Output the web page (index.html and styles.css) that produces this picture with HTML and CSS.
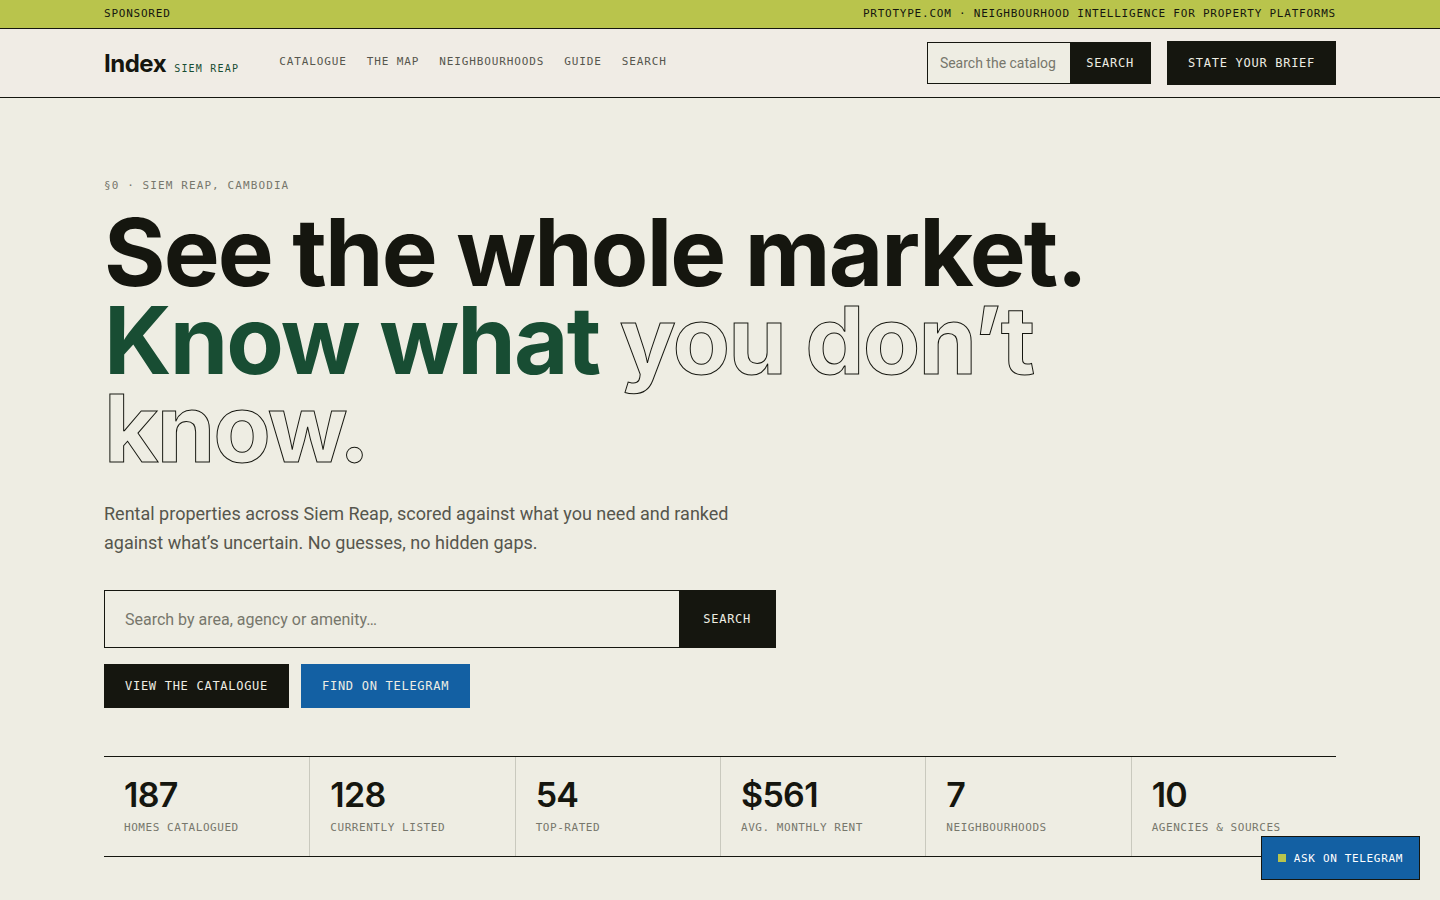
FILE: index.html
```html
<!DOCTYPE html>
<html lang="en">
  <head>
    <meta charset="UTF-8" />
    <meta name="viewport" content="width=device-width, initial-scale=1.0" />
    <title>Index Siem Reap</title>
    <link rel="stylesheet" href="styles.css">
  </head>
  <body>
    <div class="sponsor">
      <div class="wrap sponsor-inner">
        <span>Sponsored</span>
        <span>prtotype.com · Neighbourhood intelligence for property platforms</span>
      </div>
    </div>

    <header class="header">
      <div class="wrap header-inner">
        <a class="brand" href="#">Index <span class="brand-place">Siem Reap</span></a>
        <nav class="nav">
          <a href="#">Catalogue</a>
          <a href="#">The map</a>
          <a href="#">Neighbourhoods</a>
          <a href="#">Guide</a>
          <a href="#">Search</a>
        </nav>
        <form class="search search-small">
          <input type="text" aria-label="Search the catalogue" placeholder="Search the catalog" />
          <button type="submit">Search</button>
        </form>
        <a class="button" href="#">State your brief</a>
      </div>
    </header>

    <main class="wrap hero">
      <p class="eyebrow">§0 · Siem Reap, Cambodia</p>
      <h1>
        See the whole market.<br />
        <span class="green">Know what</span> <span class="outline">you don’t know.</span>
      </h1>
      <p class="lead">
        Rental properties across Siem Reap, scored against what you need and
        ranked against what’s uncertain. No guesses, no hidden gaps.
      </p>
      <form class="search search-large">
        <input type="text" aria-label="Search homes" placeholder="Search by area, agency or amenity…" />
        <button type="submit">Search</button>
      </form>
      <div class="actions">
        <a class="button" href="#">View the catalogue</a>
        <a class="button button-blue" href="#">Find on Telegram</a>
      </div>

      <dl class="stats">
        <div class="stat">
          <dt>Homes catalogued</dt>
          <dd>187</dd>
        </div>
        <div class="stat">
          <dt>Currently listed</dt>
          <dd>128</dd>
        </div>
        <div class="stat">
          <dt>Top-rated</dt>
          <dd>54</dd>
        </div>
        <div class="stat">
          <dt>Avg. monthly rent</dt>
          <dd>$561</dd>
        </div>
        <div class="stat">
          <dt>Neighbourhoods</dt>
          <dd>7</dd>
        </div>
        <div class="stat">
          <dt>Agencies &amp; sources</dt>
          <dd>10</dd>
        </div>
      </dl>
    </main>

    <a class="telegram" href="#"><span class="telegram-dot"></span>Ask on Telegram</a>
  </body>
</html>
```

FILE: styles.css
```css
:root {
  --ink: #15160f;
  --paper: #eeede3;
  --panel: #f0ece5;
  --text: #56564d;
  --muted: #77776c;
  --line: #c9c9be;
  --green: #184d33;
  --lime: #b9c44c;
  --blue: #1360a3;
  --mono: "DejaVu Sans Mono", monospace;
  --sans: Roboto, sans-serif;
}
* {
  box-sizing: border-box;
}
body {
  margin: 0;
  background: var(--paper);
  color: var(--ink);
  font-family: var(--sans);
}
a {
  color: inherit;
  text-decoration: none;
}
.wrap {
  max-width: 1280px;
  margin: 0 auto;
  padding: 0 24px;
}

/* sponsor strip */
.sponsor {
  background: var(--lime);
  border-bottom: 1px solid var(--ink);
  font-family: var(--mono);
  font-size: 11px;
  line-height: 16px;
  letter-spacing: 0.07em;
  text-transform: uppercase;
}
.sponsor-inner {
  display: flex;
  justify-content: space-between;
  padding-top: 6px;
  padding-bottom: 6px;
}

/* header */
.header {
  background: var(--panel);
  border-bottom: 1px solid var(--ink);
}
.header-inner {
  display: flex;
  align-items: center;
  gap: 16px;
  padding-top: 12px;
  padding-bottom: 12px;
}
.brand {
  display: flex;
  align-items: baseline;
  gap: 8px;
  font-family: Inter, sans-serif;
  font-size: 24px;
  font-weight: 700;
  letter-spacing: -0.02em;
}
.brand-place {
  font-family: var(--mono);
  font-size: 10px;
  font-weight: 400;
  letter-spacing: 0.12em;
  text-transform: uppercase;
  color: var(--green);
}
.nav {
  display: flex;
  gap: 20px;
  margin-left: 24px;
  margin-right: auto;
  font-family: var(--mono);
  font-size: 11px;
  line-height: 16px;
  letter-spacing: 0.08em;
  text-transform: uppercase;
  color: var(--text);
}
.nav a {
  padding-bottom: 2px;
  border-bottom: 1px solid transparent;
}

/* search fields */
.search {
  display: flex;
  border: 1px solid var(--ink);
  background: var(--paper);
}
.search input {
  flex: 1;
  min-width: 0;
  border: 0;
  margin: 0;
  padding: 0 20px;
  background: transparent;
  color: var(--ink);
  font-family: var(--sans);
  font-size: 16px;
}
.search input::placeholder {
  color: var(--muted);
  opacity: 1;
}
.search button {
  border: 0;
  padding: 0 24px;
  background: var(--ink);
}
.search button,
.button {
  color: var(--paper);
  font-family: var(--mono);
  font-size: 12px;
  letter-spacing: 0.06em;
  text-transform: uppercase;
  cursor: pointer;
}
.search-small {
  width: 224px;
  height: 42px;
}
.search-small input {
  padding: 0 12px;
  font-size: 14px;
}
.search-small button {
  padding: 0 16px;
}
.search-large {
  max-width: 672px;
  height: 58px;
}
.button {
  display: inline-flex;
  align-items: center;
  height: 44px;
  padding: 0 20px;
  border: 1px solid var(--ink);
  background: var(--ink);
}
.button-blue {
  background: var(--blue);
  border-color: var(--blue);
}

/* hero */
.hero {
  padding-top: 80px;
  padding-bottom: 80px;
}
.eyebrow {
  margin: 0 0 14px;
  font-family: var(--mono);
  font-size: 11px;
  line-height: 16px;
  letter-spacing: 0.1em;
  text-transform: uppercase;
  color: var(--muted);
}
h1 {
  max-width: 1100px;
  margin: 0;
  font-family: Inter, sans-serif;
  font-size: 94px;
  font-weight: 700;
  line-height: 88px;
  letter-spacing: -0.02em;
}
.green {
  color: var(--green);
}
.outline {
  color: transparent;
  -webkit-text-stroke: 1px var(--ink);
}
.lead {
  max-width: 672px;
  margin: 27px 0 33px;
  font-size: 18px;
  line-height: 29px;
  color: var(--text);
}
.actions {
  display: flex;
  gap: 12px;
  margin-top: 16px;
}

/* stats */
.stats {
  display: grid;
  grid-template-columns: repeat(6, 1fr);
  margin: 48px 0 0;
  border-top: 1px solid var(--ink);
  border-bottom: 1px solid var(--ink);
}
.stat {
  display: flex;
  flex-direction: column-reverse;
  justify-content: flex-end;
  gap: 8px;
  padding: 20px;
  border-left: 1px solid var(--line);
}
.stat:first-child {
  border-left: 0;
}
.stat dt {
  font-family: var(--mono);
  font-size: 11px;
  line-height: 16px;
  letter-spacing: 0.05em;
  text-transform: uppercase;
  white-space: nowrap;
  color: var(--muted);
}
.stat dd {
  margin: 0;
  font-family: Inter, sans-serif;
  font-size: 34px;
  font-weight: 600;
  line-height: 35px;
  letter-spacing: -0.02em;
}

/* floating chat link */
.telegram {
  position: fixed;
  right: 20px;
  bottom: 20px;
  display: flex;
  align-items: center;
  gap: 8px;
  height: 44px;
  padding: 0 16px;
  border: 1px solid var(--ink);
  background: var(--blue);
  color: #fff;
  font-family: var(--mono);
  font-size: 11px;
  letter-spacing: 0.06em;
  text-transform: uppercase;
}
.telegram-dot {
  width: 8px;
  height: 8px;
  background: var(--lime);
}
@media (max-width: 1000px) {
  .nav {
    display: none;
  }
  .brand {
    margin-right: auto;
  }
  h1 {
    font-size: 56px;
    line-height: 52px;
  }
  .stats {
    grid-template-columns: repeat(2, 1fr);
  }
}
```
